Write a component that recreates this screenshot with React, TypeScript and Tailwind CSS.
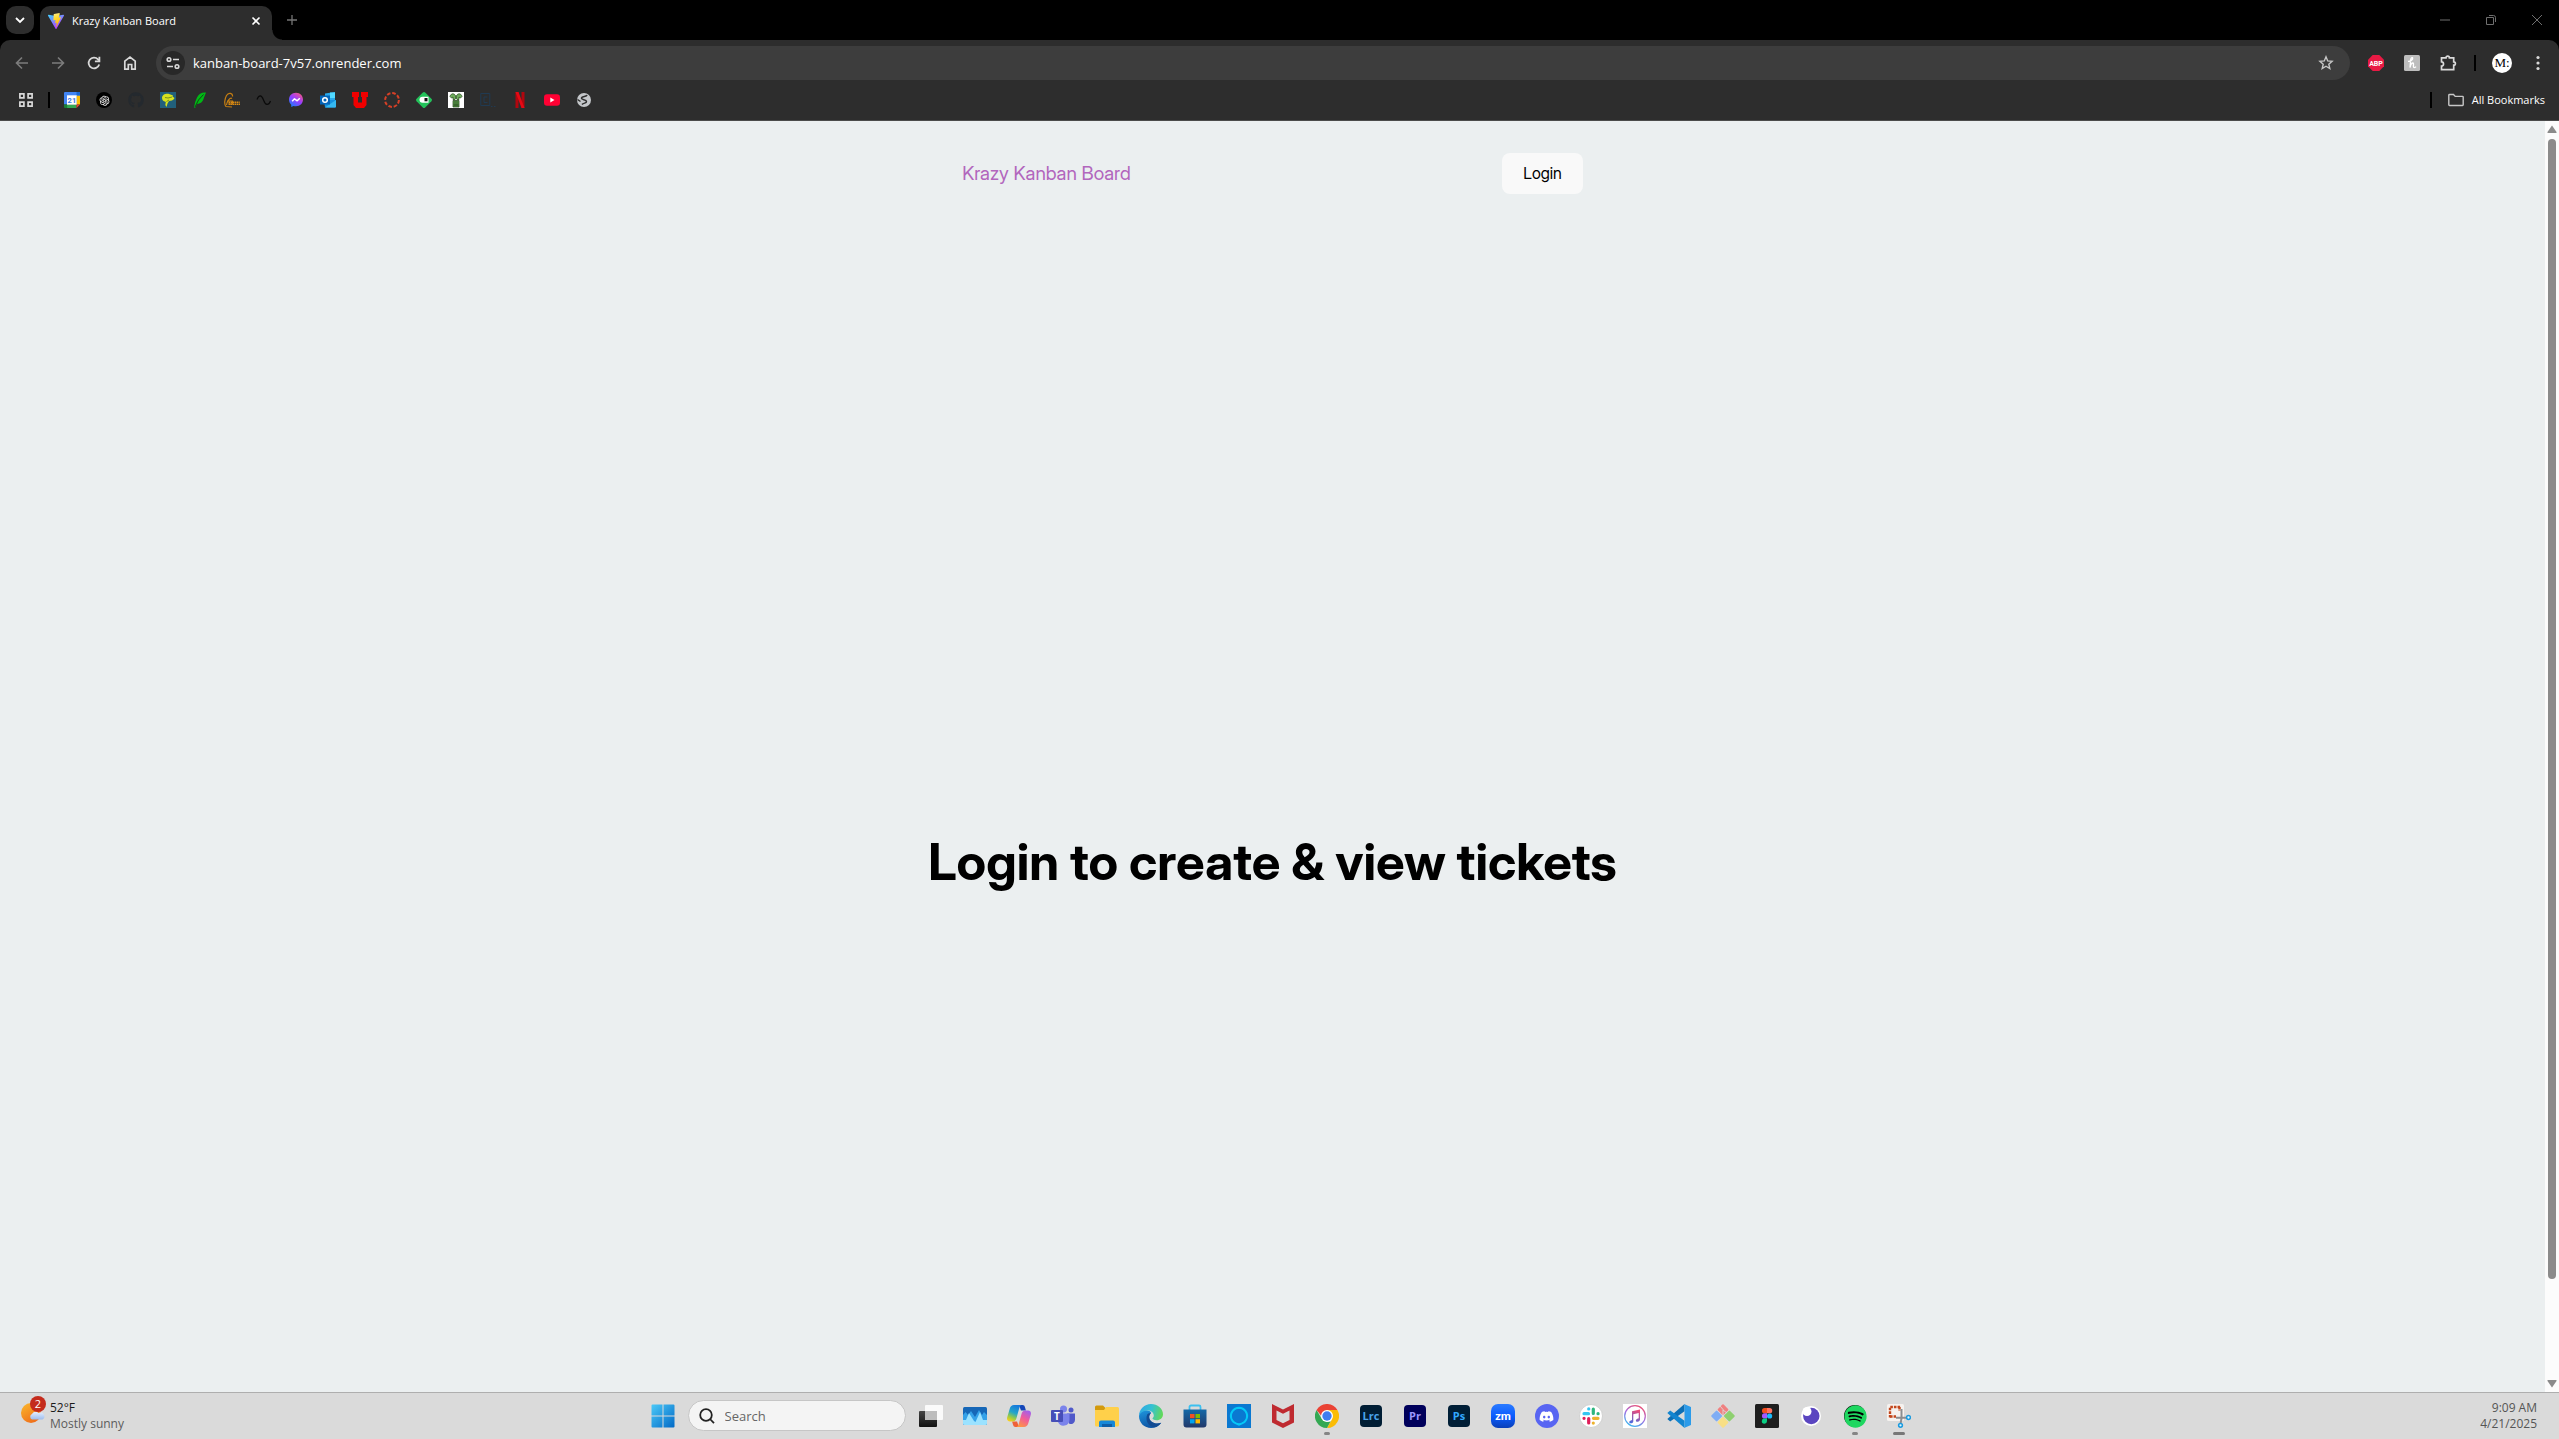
import type { ReactNode } from "react";
import { AiOutlineOpenAI } from "react-icons/ai";
import { FaDiscord, FaGithub, FaSpotify } from "react-icons/fa";

/* ---------- Browser icons ---------- */

const ViteLogo = () => (
  <svg viewBox="0 0 32 32" className="size-4" aria-hidden="true">
    <defs>
      <linearGradient id="vite-a" x1="0" y1="0" x2="0.6" y2="1">
        <stop offset="0" stopColor="#41d1ff" />
        <stop offset="1" stopColor="#bd34fe" />
      </linearGradient>
      <linearGradient id="vite-b" x1="0.4" y1="0" x2="0.6" y2="1">
        <stop offset="0" stopColor="#ffea83" />
        <stop offset="0.3" stopColor="#ffdd35" />
        <stop offset="1" stopColor="#ffa800" />
      </linearGradient>
    </defs>
    <path fill="url(#vite-a)" d="M31.9 5.3 17 31.5c-.4.7-1.4.7-1.8 0L.1 5.3C-.3 4.5.4 3.6 1.2 3.7L16 6.200l14.700-2.500c.9-.1 1.600.8 1.200 1.600z" />
    <path fill="url(#vite-b)" d="M23 .1 12 2.200c-.3 0-.5.3-.5.5l-.7 11.500c0 .4.3.7.7.6l3-.7c.4-.1.7.3.6.7l-.9 4.500c-.1.4.3.7.7.6l1.900-.6c.4-.1.8.3.7.7l-1.500 7c-.1.5.5.7.8.3l.2-.3 8.900-17.700c.2-.4-.1-.8-.5-.7l-3.100.6c-.4.1-.7-.3-.6-.7l2-7.100c.1-.3-.2-.7-.7-.6z" />
  </svg>
);

const ArrowIcon = ({ flip = false }: { flip?: boolean }) => (
  <svg viewBox="0 0 16 16" className={flip ? "size-4 rotate-180" : "size-4"} fill="none" stroke="currentColor" strokeWidth="1.600" aria-hidden="true">
    <path d="M14 8H3M8 2.500 2.500 8 8 13.500" />
  </svg>
);

const ReloadIcon = () => (
  <svg viewBox="0 0 16 16" className="size-4" fill="none" stroke="currentColor" strokeWidth="1.800" aria-hidden="true">
    <path d="M13.200 9.500A5.400 5.400 0 1 1 12 4.300L13 5.500" />
    <path d="M13.400 1.800v4.500H8.900" />
  </svg>
);

const HomeIcon = () => (
  <svg viewBox="0 0 16 16" className="size-4" fill="none" stroke="currentColor" strokeWidth="1.700" aria-hidden="true">
    <path d="M2.800 6.200 8 2.100l5.200 4.100v8h-3.500V9.500H6.300v4.700H2.800z" />
  </svg>
);

const TuneIcon = () => (
  <svg viewBox="0 0 16 16" className="size-4" fill="none" stroke="currentColor" strokeWidth="1.600" aria-hidden="true">
    <circle cx="4" cy="4.500" r="1.800" />
    <path d="M8 4.500h6M2 11.500h6" />
    <circle cx="12" cy="11.500" r="1.800" />
  </svg>
);

const StarIcon = () => (
  <svg viewBox="0 0 16 16" className="size-4" fill="none" stroke="currentColor" strokeWidth="1.400" aria-hidden="true">
    <path d="m8 1.800 1.700 4.100 4.400.4-3.300 2.900 1 4.300L8 11.200l-3.800 2.300 1-4.300-3.300-2.900 4.400-.4z" />
  </svg>
);

const AbpIcon = () => (
  <svg viewBox="0 0 16 16" className="size-4" aria-hidden="true">
    <path fill="#e81a44" d="M4.700 0h6.600L16 4.700v6.600L11.300 16H4.700L0 11.300V4.700z" />
    <text x="8" y="10.600" textAnchor="middle" fontFamily="Roboto" fontWeight="700" fontSize="7" fill="#fff">ABP</text>
  </svg>
);

const HoneyIcon = () => (
  <svg viewBox="0 0 16 16" className="size-4" aria-hidden="true">
    <rect width="16" height="16" rx="1.500" fill="#bdbdbd" />
    <path d="M4 6.300c2.500.2 5-1.500 4.700-3.200-.3-1.200-1.900-.3-2.100 2.200L6 12.500c.5-2.400 1.500-4.500 2.800-4.500 1.400 0 .2 3.200.8 4.200.5.700 1.700.2 2.400-.6" fill="none" stroke="#fff" strokeWidth="1.300" />
  </svg>
);

const PuzzleIcon = () => (
  <svg viewBox="0 0 18 18" className="size-[18px]" fill="none" stroke="currentColor" strokeWidth="1.700" aria-hidden="true">
    <path d="M2.500 3.800H7a1.700 1.700 0 0 1 3.400 0h4.300v4a1.700 1.700 0 0 1 0 3.400v4.500H2.500V12c2.700-.2 2.700-4 0-4.200z" />
  </svg>
);

const AppsIcon = () => (
  <svg viewBox="0 0 16 16" className="size-4" fill="none" stroke="#d9d9d9" strokeWidth="1.700" aria-hidden="true">
    <path d="M1.900 1.900h4v4h-4zM10.100 1.900h4v4h-4zM1.900 10.100h4v4h-4zM10.100 10.100h4v4h-4z" />
  </svg>
);

const FolderIcon = () => (
  <svg viewBox="0 0 16 16" className="size-4" fill="none" stroke="#c7c7c7" strokeWidth="1.400" aria-hidden="true">
    <path d="M.8 3.200c0-.4.3-.7.7-.7h4l1.700 1.900h7.300c.4 0 .7.3.7.7v7.700c0 .4-.3.7-.7.7h-13c-.4 0-.7-.3-.7-.7z" />
  </svg>
);

/* ---------- Bookmark icons ---------- */

const Mark = ({ children }: { children: ReactNode }) => (
  <svg viewBox="0 0 16 16" className="size-4" aria-hidden="true">{children}</svg>
);

const bookmarks: { label: string; icon: ReactNode }[] = [
  {
    label: "Calendar",
    icon: (
      <Mark>
        <path fill="#4285f4" d="M0 1a1 1 0 0 1 1-1h14a1 1 0 0 1 1 1v3H0z" />
        <path fill="#4285f4" d="M0 3h3.500v9.500H0z" />
        <path fill="#fbbc04" d="M12.500 3.500H16v9h-3.500z" />
        <path fill="#34a853" d="M3 12.500h9.500V16H3z" />
        <path fill="#188038" d="M0 12.500h3.200V16H1a1 1 0 0 1-1-1z" />
        <path fill="#1967d2" d="M12.500 0H15a1 1 0 0 1 1 1v2.500h-3.500z" />
        <path fill="#ea4335" d="m12.500 16 3.500-3.500h-3.500z" />
        <path fill="#fff" d="M3 3.300h9.700v9.400H3z" />
        <text x="7.900" y="10.700" textAnchor="middle" fontFamily="Roboto" fontWeight="700" fontSize="7.500" fill="#3b78e7">21</text>
      </Mark>
    ),
  },
  {
    label: "ChatGPT",
    icon: (
      <span className="grid size-4 place-items-center rounded-full bg-black text-[#e8e8e8]">
        <AiOutlineOpenAI size={13} />
      </span>
    ),
  },
  { label: "GitHub", icon: <FaGithub size={16} className="text-[#24292e]" /> },
  {
    label: "Parrot",
    icon: (
      <Mark>
        <path fill="#21607c" d="M0 0h16v16H0z" />
        <path fill="#d6e21f" d="M2 6C2 3 5 1.500 8.500 1.800L13 3.500l-.5 1 2 1.500-.7 1.200L12 8.500l-3 .5-1.500 2.500-1 3.500-1.200-2 .5-3L3.500 9 2.500 8z" />
        <path stroke="#4a6a20" strokeWidth="0.700" fill="none" d="M5 5.500 8 6l4-1M6.500 9.500 9 8" />
      </Mark>
    ),
  },
  {
    label: "Robinhood",
    icon: (
      <Mark>
        <path fill="#00b815" d="M14 .5C10 0 6.500 2 5 5.500L3.200 10 2 15.500l1.200.2L5 12c4.500-.5 6-3 7-6.500z" />
        <path d="M3 15 6.500 8 11.500 2.500" stroke="#123c14" strokeWidth="0.900" fill="none" />
      </Mark>
    ),
  },
  {
    label: "Beard",
    icon: (
      <Mark>
        <path d="M8.500 4.500C9 1 4.500 0 2.500 3.500S0 12.500 2 14.500l6 .5M2.500 13c.5-3.500 3.500-8 5.500-6.500M3 9h5.500v3H4" fill="none" stroke="#c77f12" strokeWidth="1.200" />
        <path d="M4.500 10.200h11.200M5 12.300h11" fill="none" stroke="#d98a12" strokeWidth="1.500" strokeDasharray="1.500 .5" />
      </Mark>
    ),
  },
  {
    label: "Wave",
    icon: (
      <Mark>
        <path d="M1 7.500C3 2.500 5.500 2.500 7.500 8s5 6 7 1" fill="none" stroke="#0a0a0a" strokeWidth="1.200" />
      </Mark>
    ),
  },
  {
    label: "Messenger",
    icon: (
      <Mark>
        <defs>
          <linearGradient id="msgr" x1="0.200" y1="1" x2="0.900" y2="0">
            <stop offset="0" stopColor="#1a7cff" />
            <stop offset="0.500" stopColor="#9a3cff" />
            <stop offset="1" stopColor="#ff5a78" />
          </linearGradient>
        </defs>
        <path fill="url(#msgr)" d="M8 .8C3.700.8 1 3.800 1 7.600c0 2.100.8 3.900 2.200 5.100l.1 2.200 2.200-.9c.8.2 1.600.3 2.500.3 4.300 0 7-3 7-6.700S12.300.8 8 .8z" />
        <path d="m4.200 9.300 2.300-2.500 2.700 2 2.600-2.500" fill="none" stroke="#fff" strokeWidth="1.500" strokeLinejoin="round" />
      </Mark>
    ),
  },
  {
    label: "Outlook",
    icon: (
      <Mark>
        <path fill="#28a8ea" d="M5 1.500 15 0v8H5z" />
        <path fill="#50d9ff" d="M10 .5h5V6h-5z" />
        <path fill="#1490df" d="M4 8h12v6.500a1 1 0 0 1-1 1H5z" />
        <path fill="#35b8f1" d="m16 8-11 7.500h10a1 1 0 0 0 1-1z" />
        <path fill="#0364b8" d="M0 3.500h10v9H0z" />
        <circle cx="5" cy="8" r="2.300" fill="none" stroke="#fff" strokeWidth="1.500" />
      </Mark>
    ),
  },
  {
    label: "University",
    icon: (
      <Mark>
        <path fill="#f00000" d="M0 0h7v5H6v5.500h4V5H9V0h7v5h-1.500v8L12 16H4l-2.500-3V5H0z" />
      </Mark>
    ),
  },
  {
    label: "Canvas",
    icon: (
      <Mark>
        <circle cx="8" cy="8" r="6.900" fill="none" stroke="#d64027" strokeWidth="2" strokeDasharray="3.600 1.820" />
      </Mark>
    ),
  },
  {
    label: "Camel",
    icon: (
      <Mark>
        <path fill="#23c15a" d="M6.800.6a1.700 1.700 0 0 1 2.400 0l6.200 6.200a1.700 1.700 0 0 1 0 2.400l-6.200 6.200a1.700 1.700 0 0 1-2.400 0L.6 9.200a1.700 1.700 0 0 1 0-2.400z" />
        <path fill="#fff" d="M6.500 4.700h6v6h-6a3 3 0 0 1 0-6z" />
        <path fill="#111" d="M8.500 6h3v3.300h-3z" />
      </Mark>
    ),
  },
  {
    label: "Palm",
    icon: (
      <Mark>
        <path fill="#fff" d="M0 0h16v16H0z" />
        <path fill="#5d9c4c" stroke="#22421a" strokeWidth="0.700" d="M5 8.500h6V15H5z" />
        <path fill="#6fae5c" stroke="#22421a" strokeWidth="0.700" d="M8 5.500C7.500 1 3 .5 2 4.500l1.500 1.500L5 5v2.500h2zM8 5.500C8.500 1 13 .5 14 4.500L12.500 6 11 5v2.500H9z" />
        <path stroke="#22421a" strokeWidth="0.700" d="M7 9v5.500M9 9v5.500M5.500 13h5" />
      </Mark>
    ),
  },
  {
    label: "Code",
    icon: (
      <Mark>
        <path fill="none" stroke="#203a52" strokeWidth="1" d="M.8 1.500h9v12h-9zM7.500 5H4v5.500h3.500M11 14.500h1.500m1.500 0h1.500" />
      </Mark>
    ),
  },
  {
    label: "Netflix",
    icon: (
      <Mark>
        <path fill="#b1060f" d="M3.500 0h3v16h-3zM9.500 0h3v16h-3z" />
        <path fill="#e50914" d="M3.500 0h3l6 16h-3z" />
      </Mark>
    ),
  },
  {
    label: "YouTube",
    icon: (
      <Mark>
        <rect y="2.300" width="16" height="11.400" rx="3" fill="#ff0033" />
        <path fill="#fff" d="M6.300 5.500 10.500 8l-4.200 2.500z" />
      </Mark>
    ),
  },
  {
    label: "Web",
    icon: (
      <Mark>
        <circle cx="8" cy="8" r="7" fill="#c4c7ca" />
        <path d="M11 3C10.500 5 6 4 5.500 6s5 1.300 5 3.500-3 1-4.500 3M1.500 7.500 4.500 9.500" fill="none" stroke="#2d2d2d" strokeWidth="1.500" />
      </Mark>
    ),
  },
];

/* ---------- Taskbar icons ---------- */

const App24 = ({ children }: { children: ReactNode }) => (
  <svg viewBox="0 0 24 24" className="size-6" aria-hidden="true">{children}</svg>
);

const AdobeTile = ({ text, bg, fg }: { text: string; bg: string; fg: string }) => (
  <App24>
    <rect x="1" y="1" width="22" height="22" rx="4" fill={bg} />
    <text x="12" y="16" textAnchor="middle" fontFamily="Open Sans" fontWeight="700" fontSize="11" fill={fg}>{text}</text>
  </App24>
);

const StartIcon = () => (
  <App24>
    <defs>
      <linearGradient id="win" x1="0" y1="0" x2="24" y2="24" gradientUnits="userSpaceOnUse">
        <stop offset="0" stopColor="#4dcbf9" />
        <stop offset="1" stopColor="#0067c5" />
      </linearGradient>
    </defs>
    <path fill="url(#win)" d="M1.500.5h10v11h-11v-10a1 1 0 0 1 1-1zM12.500.5h10a1 1 0 0 1 1 1v10h-11zM.5 12.500h11v11h-10a1 1 0 0 1-1-1zM12.500 12.500h11v10a1 1 0 0 1-1 1h-10z" />
  </App24>
);

const apps: { label: string; icon: ReactNode; running?: "idle" | "active" }[] = [
  {
    label: "Task View",
    icon: (
      <App24>
        <defs>
          <linearGradient id="tv-dark" x1="0" y1="0" x2="0" y2="1">
            <stop offset="0" stopColor="#444" />
            <stop offset="1" stopColor="#111" />
          </linearGradient>
        </defs>
        <rect x="0" y="7" width="18" height="16" rx="1" fill="url(#tv-dark)" />
        <rect x="6" y="1" width="18" height="15" rx="1" fill="#fff" fillOpacity="0.850" />
        <path fill="#bcbcbc" d="M6 7h12v9H6z" />
      </App24>
    ),
  },
  {
    label: "Resource Monitor",
    icon: (
      <App24>
        <rect y="3" width="24" height="18" rx="1.500" fill="#1667b7" />
        <path fill="#34a1e8" d="M0 11 2.500 8 5 11l3-4 4 6 4-7 3 5 2-3 3 3v8H0z" />
        <path fill="#9be2ff" d="M0 16h3l3-7 5 8 1.500 1L17 8l3 8h4v3.500a1.500 1.500 0 0 1-1.500 1.500h-21A1.500 1.500 0 0 1 0 19.500z" />
      </App24>
    ),
  },
  {
    label: "Copilot",
    icon: (
      <App24>
        <defs>
          <linearGradient id="cp-a" x1="0.600" y1="0" x2="0.200" y2="1">
            <stop offset="0" stopColor="#1679dd" />
            <stop offset="0.450" stopColor="#24a6c8" />
            <stop offset="0.750" stopColor="#9acb43" />
            <stop offset="1" stopColor="#ffcf17" />
          </linearGradient>
          <linearGradient id="cp-b" x1="0.700" y1="0" x2="0.200" y2="1">
            <stop offset="0" stopColor="#a560e8" />
            <stop offset="0.450" stopColor="#f05b9b" />
            <stop offset="1" stopColor="#ff9a3d" />
          </linearGradient>
        </defs>
        <path fill="#1546b8" d="M12 1h3.500c1.500 0 2 .8 2.400 2l1 3.500H14z" />
        <path fill="#ef6138" d="M12 23H8.500c-1.500 0-2-.8-2.400-2l-1-3.500H10z" />
        <path fill="url(#cp-a)" d="M7 1h7.500c-1.200.4-1.700 1.500-2.200 3L9.500 14c-.6 2.200-1.500 3.500-4 3.500H3c-2.500 0-3.500-2-2.700-4.500l2.500-8.500C3.500 2.200 4.800 1 7 1z" />
        <path fill="url(#cp-b)" d="M17 23H9.500c1.200-.4 1.700-1.500 2.200-3l2.800-10c.6-2.200 1.500-3.500 4-3.500H21c2.500 0 3.500 2 2.700 4.500l-2.500 8.500C20.500 21.800 19.200 23 17 23z" />
      </App24>
    ),
  },
  {
    label: "Teams",
    icon: (
      <App24>
        <circle cx="12.500" cy="5" r="3.500" fill="#7b83eb" />
        <circle cx="20" cy="6" r="2.500" fill="#5059c9" />
        <path fill="#5059c9" d="M16 9.500h8v6.500a4 4 0 0 1-6 3.500z" />
        <path fill="#7b83eb" d="M7 9.500h11.500V16a6 6 0 0 1-11.500 2z" />
        <rect y="6" width="12" height="12" rx="1" fill="#464eb8" />
        <text x="6" y="15.500" textAnchor="middle" fontFamily="Open Sans" fontWeight="700" fontSize="10" fill="#fff">T</text>
      </App24>
    ),
  },
  {
    label: "File Explorer",
    icon: (
      <App24>
        <path fill="#d39a0d" d="M0 3a1.500 1.500 0 0 1 1.500-1.500H8L10.500 4v3H0z" />
        <path fill="#ffd04a" d="M0 6h9l2-3h11.500A1.500 1.500 0 0 1 24 4.500V21a1.500 1.500 0 0 1-1.500 1.500h-21A1.500 1.500 0 0 1 0 21z" />
        <path fill="#1788d8" d="M4 23v-4.500a2 2 0 0 1 2-2h12a2 2 0 0 1 2 2V23z" />
        <path fill="#0f5ea8" d="M7 20h10v3H7z" />
      </App24>
    ),
  },
  {
    label: "Edge",
    icon: (
      <App24>
        <defs>
          <linearGradient id="ed-a" x1="0" y1="0.300" x2="1" y2="0.500">
            <stop offset="0" stopColor="#2fa8e4" />
            <stop offset="0.500" stopColor="#35c1d2" />
            <stop offset="1" stopColor="#62d957" />
          </linearGradient>
          <linearGradient id="ed-b" x1="0" y1="0" x2="0.300" y2="1">
            <stop offset="0" stopColor="#1f96dd" />
            <stop offset="1" stopColor="#0d55a5" />
          </linearGradient>
        </defs>
        <path fill="url(#ed-b)" d="M0 12c0 7 5.500 12 12 12 4.500 0 8-2 10.200-5.300-5 2.300-12-.4-12-5.700 0-2 1-3.200 2-4C11 5 1 5 0 12z" />
        <path fill="#124a92" d="M8 11c-2 6 2 13 9 11.800 2.300-1 4-2.400 5.200-4.100-5 2.300-12-.4-12-5.700 0-1.500.7-2.800 1.600-3.700C10 9 8.500 9.500 8 11z" />
        <path fill="url(#ed-a)" d="M0 12C0 5 5.500 0 12 0s12 4.800 12 10.300c0 3.800-3 6-6.300 6-3 0-4.200-1-4.200-1.700s1.300-1 1.300-3.100C14.800 8.500 12 6.500 8.500 6.500 4 6.500.7 9 0 12z" />
      </App24>
    ),
  },
  {
    label: "Microsoft Store",
    icon: (
      <App24>
        <defs>
          <linearGradient id="store" x1="0" y1="0" x2="0" y2="1">
            <stop offset="0" stopColor="#1469a8" />
            <stop offset="1" stopColor="#21386a" />
          </linearGradient>
        </defs>
        <path d="M6.500 6V3A1.500 1.500 0 0 1 8 1.500h8A1.500 1.500 0 0 1 17.500 3v3" fill="none" stroke="#3cc0f0" strokeWidth="1.800" />
        <path fill="url(#store)" d="M.5 5.500h23v15a3 3 0 0 1-3 3h-17a3 3 0 0 1-3-3z" />
        <path fill="#f25022" d="M7 10h4.500v4.200H7z" />
        <path fill="#7fba00" d="M12.500 10H17v4.200h-4.500z" />
        <path fill="#00a4ef" d="M7 15.200h4.500v4.200H7z" />
        <path fill="#ffb900" d="M12.500 15.200H17v4.200h-4.500z" />
      </App24>
    ),
  },
  {
    label: "Alexa",
    icon: (
      <App24>
        <path fill="#0a78d1" d="M0 0h24v24H0z" />
        <path d="M10 19.700A8 8 0 1 1 14 19.700L12 20.500z" fill="none" stroke="#05c8f7" strokeWidth="2.200" />
        <circle cx="12" cy="12" r="7" fill="#0a78d1" />
      </App24>
    ),
  },
  {
    label: "McAfee",
    icon: (
      <App24>
        <path fill="#bf2a30" d="m1 0 11 5.500L23 0v18.500L12 24 1 18.500z" />
        <path fill="#dadada" d="m5.500 6.500 6.500 3.300 6.500-3.300v9.500L12 19.300 5.500 16z" />
      </App24>
    ),
  },
  {
    label: "Chrome",
    running: "idle",
    icon: (
      <App24>
        <path fill="#ea4335" d="M12 12 1.600 6a12 12 0 0 1 20.800 0z" />
        <path fill="#fbbc05" d="M12 12V6h10.400A12 12 0 0 1 12 24l5.200-9z" />
        <path fill="#34a853" d="M1.600 6 6.800 15 12 18l3.500-.5L12 24A12 12 0 0 1 1.600 6z" />
        <path fill="#ea4335" d="M1.600 6h20.800H12v6H6.500z" />
        <circle cx="12" cy="12" r="6" fill="#fff" />
        <circle cx="12" cy="12" r="4.700" fill="#3f7df0" />
      </App24>
    ),
  },
  { label: "Lightroom Classic", icon: <AdobeTile text="Lrc" bg="#001d34" fg="#4aa3ea" /> },
  { label: "Premiere Pro", icon: <AdobeTile text="Pr" bg="#00005b" fg="#9c96ff" /> },
  { label: "Photoshop", icon: <AdobeTile text="Ps" bg="#001e36" fg="#31a8ff" /> },
  {
    label: "Zoom",
    icon: (
      <App24>
        <defs>
          <linearGradient id="zm" x1="0" y1="0" x2="0" y2="1">
            <stop offset="0" stopColor="#2b7bff" />
            <stop offset="0.500" stopColor="#0b5cff" />
            <stop offset="1" stopColor="#0a3fb8" />
          </linearGradient>
        </defs>
        <rect width="24" height="24" rx="7" fill="url(#zm)" />
        <text x="12" y="16" textAnchor="middle" fontFamily="Lato" fontWeight="900" fontSize="12" fill="#fff">zm</text>
      </App24>
    ),
  },
  {
    label: "Discord",
    icon: (
      <span className="grid size-6 place-items-center rounded-full bg-[#5865f2] text-white">
        <FaDiscord size={15} />
      </span>
    ),
  },
  {
    label: "Slack",
    icon: (
      <App24>
        <circle cx="12" cy="12" r="11.500" fill="#fff" stroke="#c4c4c4" strokeWidth="0.700" />
        <g strokeWidth="3.200" strokeLinecap="round" fill="none">
          <path stroke="#36c5f0" d="M5 9.700h4.500M9.700 4.900h.1" />
          <path stroke="#2eb67d" d="M14.300 5v4.500M19 9.700h.1" />
          <path stroke="#ecb22e" d="M14.500 14.300H19M14.300 19v.1" />
          <path stroke="#e01e5a" d="M9.700 14.500V19M5 14.300h.1" />
        </g>
      </App24>
    ),
  },
  {
    label: "iTunes",
    icon: (
      <App24>
        <defs>
          <linearGradient id="it" x1="0.800" y1="0" x2="0.300" y2="1">
            <stop offset="0" stopColor="#f0506e" />
            <stop offset="0.500" stopColor="#a46be0" />
            <stop offset="1" stopColor="#40b8f0" />
          </linearGradient>
          <linearGradient id="it-note" x1="0.600" y1="0" x2="0.300" y2="1">
            <stop offset="0" stopColor="#ef4a78" />
            <stop offset="1" stopColor="#4a6ae0" />
          </linearGradient>
        </defs>
        <path fill="#fff" d="M0 0h24v24H0z" />
        <circle cx="12" cy="12" r="10.300" fill="#fff" stroke="url(#it)" strokeWidth="1.200" />
        <path fill="url(#it-note)" d="M9 7.300 17 5.500v10c0 1.300-1 2-2.200 2.200-1.500.2-2.300-.8-1.800-1.800.6-1.300 2-1 2.700-1.600V9l-5.400 1.200v7c0 1.300-1 2-2.100 2.100-1.500.2-2.300-.8-1.800-1.800C7 16.200 8.400 16.500 9 15.900z" />
      </App24>
    ),
  },
  {
    label: "Visual Studio Code",
    icon: (
      <App24>
        <path fill="#0d6fb5" d="M17.500 0v7.200L3.200 17.500.300 15z" />
        <path fill="#1285d0" d="M17.500 24v-7.200L3.200 6.500.300 9z" />
        <path fill="#2b9bea" d="M17 0 24 3v18l-7 3c.5-.3.5-.8.5-1.300V1.300C17.500.8 17.500.3 17 0z" />
      </App24>
    ),
  },
  {
    label: "Git",
    icon: (
      <svg viewBox="0 0 24 24" className="size-6 overflow-visible" aria-hidden="true">
        <g transform="rotate(45 12 12)">
          <rect x="3.400" y="3.400" width="8.200" height="8.200" rx="1" fill="#f08080" />
          <rect x="12.400" y="3.400" width="8.200" height="8.200" rx="1" fill="#8ed070" />
          <rect x="3.400" y="12.400" width="8.200" height="8.200" rx="1" fill="#7fadf5" />
          <rect x="12.400" y="12.400" width="8.200" height="8.200" rx="1" fill="#f8df85" />
        </g>
        <path d="m9 2 3 3.500V12M12 6l4 3" stroke="#dadada" strokeWidth="0.900" fill="none" />
      </svg>
    ),
  },
  {
    label: "Figma",
    icon: (
      <App24>
        <rect width="24" height="24" rx="1.500" fill="#1e1e1e" />
        <path fill="#f24e1e" d="M12 4v5.300H9.600a2.600 2.600 0 0 1 0-5.300z" />
        <path fill="#ff7262" d="M12 4h2.600a2.600 2.600 0 0 1 0 5.300H12z" />
        <path fill="#a259ff" d="M12 9.300v5.300H9.600a2.600 2.600 0 0 1 0-5.300z" />
        <circle cx="14.600" cy="12" r="2.600" fill="#1abcfe" />
        <path fill="#0acf83" d="M9.600 14.600H12v2.700a2.600 2.600 0 1 1-2.400-2.700z" />
      </App24>
    ),
  },
  {
    label: "Insomnia",
    icon: (
      <App24>
        <circle cx="12" cy="12" r="10" fill="#fff" />
        <circle cx="12.300" cy="12" r="8.200" fill="#5a45c0" />
        <circle cx="8" cy="7.500" r="4.500" fill="#fff" />
      </App24>
    ),
  },
  {
    label: "Spotify",
    running: "idle",
    icon: (
      <span className="grid size-[22px] place-items-center rounded-full bg-black text-[#1ed760]">
        <FaSpotify size={23} className="shrink-0" />
      </span>
    ),
  },
  {
    label: "Snipping Tool",
    running: "active",
    icon: (
      <App24>
        <rect width="17" height="17" rx="1.500" fill="#f6f2ef" />
        <path d="M3 13.500V3h10.500" fill="none" stroke="#c3461b" strokeWidth="2.400" strokeDasharray="2.600 1" />
        <path d="M3 12.500h6M12.500 3v4" fill="none" stroke="#c3461b" strokeWidth="2.400" strokeDasharray="2.600 1" />
        <path d="M14.500 5v9.500L13.500 20M9 13.800h12" fill="none" stroke="#8b8d90" strokeWidth="2" />
        <circle cx="21.500" cy="13.500" r="1.900" fill="#dff3fc" stroke="#1a9be0" strokeWidth="1.500" />
        <circle cx="13.500" cy="21.300" r="1.900" fill="#dff3fc" stroke="#1a9be0" strokeWidth="1.500" />
      </App24>
    ),
  },
];

/* ---------- Browser chrome ---------- */

function TabStrip() {
  return (
    <header className="flex h-10 shrink-0 bg-black pl-1.5">
      <button aria-label="Search tabs" className="mt-1.5 grid size-7 place-items-center rounded-[10px] bg-[#2d2d2d] text-white">
        <svg viewBox="0 0 10 10" className="size-2.5" fill="none" stroke="currentColor" strokeWidth="1.800" aria-hidden="true">
          <path d="m1 3 4 4 4-4" />
        </svg>
      </button>
      <div className="ml-1.5 mt-1.5 flex w-[232px] items-center rounded-t-[10px] bg-[#2d2d2d] pb-1 pl-2 pr-2.5">
        <ViteLogo />
        <span className="ml-2 flex-1 text-[11px] leading-4 text-white">Krazy Kanban Board</span>
        <button aria-label="Close tab" className="grid size-3 place-items-center text-white">
          <svg viewBox="0 0 10 10" className="size-2.5" stroke="currentColor" strokeWidth="1.600" aria-hidden="true">
            <path d="m1.500 1.500 7 7m0-7-7 7" />
          </svg>
        </button>
      </div>
      <span className="mt-[30px] size-2.5 bg-[radial-gradient(circle_at_top_right,transparent_9px,#2d2d2d_10px)]" />
      <button aria-label="New tab" className="ml-1 grid size-3 place-items-center self-center text-[#757575]">
        <svg viewBox="0 0 10 10" className="size-2.5" stroke="currentColor" strokeWidth="1.300" aria-hidden="true">
          <path d="M5 0v10M0 5h10" />
        </svg>
      </button>
      <div className="ml-auto flex text-[#6f6f6f]">
        {[
          ["Minimize", "M0 5h10"],
          ["Restore", "M.5 2.500h7v7h-7zM3 .5h4.500a2 2 0 0 1 2 2V7"],
          ["Close", "m0 0 10 10M10 0 0 10"],
        ].map(([label, d]) => (
          <button key={label} aria-label={label} className="grid w-[46px] place-items-center pl-px">
            <svg viewBox="0 0 10 10" className="size-2.5 overflow-visible" fill="none" stroke="currentColor" aria-hidden="true">
              <path d={d} />
            </svg>
          </button>
        ))}
      </div>
    </header>
  );
}

function Toolbar() {
  return (
    <div className="bg-black">
      <div className="flex h-[46px] items-center rounded-t-[10px] bg-[#2d2d2d] pl-1 pr-[3px] text-[#d9d9d9]">
        <button aria-label="Back" className="grid w-9 place-items-center text-[#7c7c7c]"><ArrowIcon /></button>
        <button aria-label="Forward" className="grid w-9 place-items-center text-[#7c7c7c]"><ArrowIcon flip /></button>
        <button aria-label="Reload" className="grid w-9 place-items-center"><ReloadIcon /></button>
        <button aria-label="Home" className="grid w-9 place-items-center"><HomeIcon /></button>
        <div className="ml-2 mr-2 flex h-[34px] flex-1 items-center rounded-full bg-[#3d3d3d] pl-[5px] pr-4">
          <button aria-label="Site information" className="grid size-6 place-items-center rounded-full bg-[#282828]"><TuneIcon /></button>
          <input
            aria-label="Address"
            defaultValue="kanban-board-7v57.onrender.com"
            className="ml-2 min-w-0 flex-1 bg-transparent text-[13px] leading-5 text-white outline-none"
          />
          <button aria-label="Bookmark this tab" className="text-[#c7c7c7]"><StarIcon /></button>
        </div>
        <button aria-label="Adblock Plus" className="grid w-9 place-items-center"><AbpIcon /></button>
        <button aria-label="Honey" className="grid w-9 place-items-center"><HoneyIcon /></button>
        <button aria-label="Extensions" className="grid w-9 place-items-center"><PuzzleIcon /></button>
        <span className="mx-2 h-4 w-0.5 bg-black" />
        <button aria-label="Profile" className="grid w-9 place-items-center">
          <span className="grid size-5 place-items-center rounded-full bg-white font-['Liberation_Serif'] text-[13px] leading-4 text-black">M:</span>
        </button>
        <button aria-label="Menu" className="grid w-9 place-items-center">
          <svg viewBox="0 0 16 16" className="size-4" fill="currentColor" aria-hidden="true">
            <circle cx="8" cy="2.500" r="1.600" />
            <circle cx="8" cy="8" r="1.600" />
            <circle cx="8" cy="13.500" r="1.600" />
          </svg>
        </button>
      </div>
    </div>
  );
}

function BookmarksBar() {
  return (
    <nav aria-label="Bookmarks" className="flex h-[35px] shrink-0 items-center border-b border-[#4b4b4b] bg-[#2d2d2d] pb-1.5 pl-[18px] pr-3.5">
      <button aria-label="Apps"><AppsIcon /></button>
      <span className="ml-3.5 mr-3.5 h-4 w-0.5 bg-black" />
      <ul className="flex gap-4">
        {bookmarks.map((b) => (
          <li key={b.label}>
            <a href="#" aria-label={b.label} className="block">{b.icon}</a>
          </li>
        ))}
      </ul>
      <span className="ml-auto h-4 w-0.5 bg-black" />
      <button className="ml-4 flex items-center gap-2 text-[11px] leading-4 text-white">
        <FolderIcon />
        All Bookmarks
      </button>
    </nav>
  );
}

/* ---------- Page ---------- */

function Page() {
  return (
    <div className="flex min-h-0 flex-1">
      <div className="flex flex-1 flex-col items-center overflow-hidden bg-[#ebeff0] font-['Inter_Display','Inter',sans-serif] text-black">
        <div className="flex h-full w-fit shrink-0 flex-col">
          <div className="flex shrink-0 items-center justify-between px-[34px] py-8">
            <a href="#" className="text-[19px] leading-6 text-[#b266bd]">Krazy Kanban Board</a>
            <button className="rounded-lg bg-[#f9f9f9] px-[21px] py-2 text-[16px] leading-[25px]">Login</button>
          </div>
          <section className="flex min-h-full shrink-0 items-center justify-center">
            <h1 className="text-[51px] leading-14 font-bold whitespace-nowrap">Login to create &amp; view tickets</h1>
          </section>
        </div>
      </div>
      <div className="flex w-3.5 flex-col items-center bg-[#fcfcfc] py-1 text-[#8b8b8b]">
        <svg viewBox="0 0 10 8" className="w-2.5" fill="currentColor" aria-hidden="true">
          <path d="M5 0.500 9.500 7v1h-9V7z" />
        </svg>
        <div className="my-1.5 w-full flex-1">
          <div className="mx-auto h-12/13 w-2 rounded-full bg-[#8b8b8b]" />
        </div>
        <svg viewBox="0 0 10 8" className="w-2.5" fill="currentColor" aria-hidden="true">
          <path d="M5 7.500.5 1V0h9v1z" />
        </svg>
      </div>
    </div>
  );
}

/* ---------- Taskbar ---------- */

function Taskbar() {
  return (
    <footer className="grid h-[47px] shrink-0 grid-cols-[1fr_auto_1fr] border-t border-[#aeaeae] bg-[#dadada] pt-1 text-[12px] leading-4">
      <button className="flex items-start gap-1 justify-self-start pt-[3px] pl-5 text-left">
        <svg viewBox="0 0 26 28" className="-mt-1 w-[26px]" aria-hidden="true">
          <defs>
            <linearGradient id="sun" x1="0" y1="0" x2="0.600" y2="1">
              <stop offset="0" stopColor="#fbb92c" />
              <stop offset="1" stopColor="#ef6f1b" />
            </linearGradient>
            <linearGradient id="cloud" x1="0" y1="0" x2="0" y2="1">
              <stop offset="0" stopColor="#e6f0ff" />
              <stop offset="1" stopColor="#9dbdee" />
            </linearGradient>
          </defs>
          <circle cx="11" cy="17" r="10" fill="url(#sun)" />
          <path fill="url(#cloud)" d="M12 23.500a3 3 0 0 1 0-5.500 4 4 0 0 1 6.500-1 3.300 3.300 0 0 1 4 6.500z" />
          <circle cx="18" cy="8" r="8" fill="#c42b1c" />
          <text x="18" y="12" textAnchor="middle" fontFamily="Open Sans" fontSize="11" fill="#fff">2</text>
        </svg>
        <span>
          <span className="block text-[#1b1b1b]">52°F</span>
          <span className="block text-[#5c5c5c]">Mostly sunny</span>
        </span>
      </button>
      <div className="flex items-start pl-0.5">
        <button aria-label="Start" className="grid w-11 place-items-center pt-[7px]"><StartIcon /></button>
        <label className="mx-[3px] mt-[3px] flex h-[31px] w-[218px] items-center rounded-full border border-[#c6c6c6] bg-[#f4f4f4] pl-2.5">
          <svg viewBox="0 0 16 16" className="size-4" fill="none" stroke="#222" strokeWidth="1.800" aria-hidden="true">
            <circle cx="7" cy="7" r="5.800" />
            <path d="m11 11 4 4.200" />
          </svg>
          <input aria-label="Search" placeholder="Search" className="ml-2.5 min-w-0 flex-1 bg-transparent text-[13px] leading-5 outline-none placeholder:text-[#666]" />
        </label>
        {apps.map((app) => (
          <button key={app.label} aria-label={app.label} className="flex h-[42px] w-11 flex-col items-center pt-[7px]">
            <span className="grid size-6 place-items-center">{app.icon}</span>
            {app.running === "idle" && <span className="mt-1 h-[3px] w-1.5 rounded-full bg-[#858585]" />}
            {app.running === "active" && <span className="mt-1 h-[3px] w-3 rounded-full bg-[#777]" />}
          </button>
        ))}
      </div>
      <button className="self-start justify-self-end pt-[3px] pr-[22px] text-right text-[#555]">
        <span className="block">9:09 AM</span>
        <span className="block">4/21/2025</span>
      </button>
    </footer>
  );
}

export default function App() {
  return (
    <div className="flex h-screen flex-col overflow-hidden font-['Open_Sans',sans-serif]">
      <TabStrip />
      <Toolbar />
      <BookmarksBar />
      <Page />
      <Taskbar />
    </div>
  );
}
